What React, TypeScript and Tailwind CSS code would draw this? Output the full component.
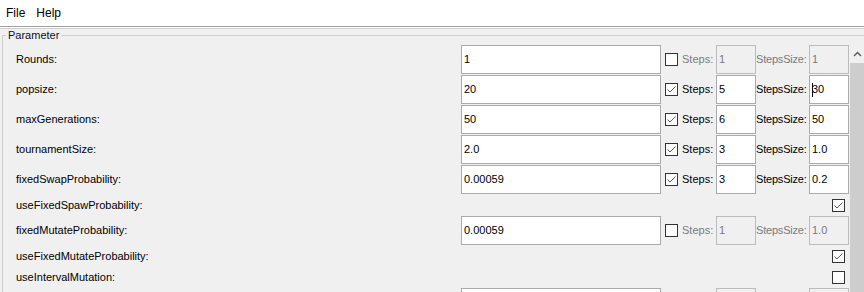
import React from 'react';

type FieldRow = {
  kind: 'field';
  label: string;
  value: string;
  stepsOn: boolean;
  steps: string;
  size: string;
  caret?: boolean;
  hideText?: boolean;
};
type CheckRow = { kind: 'check'; label: string; checked: boolean };
type Row = FieldRow | CheckRow;

const ROWS: Row[] = [
  { kind: 'field', label: 'Rounds:', value: '1', stepsOn: false, steps: '1', size: '1' },
  { kind: 'field', label: 'popsize:', value: '20', stepsOn: true, steps: '5', size: '30', caret: true },
  { kind: 'field', label: 'maxGenerations:', value: '50', stepsOn: true, steps: '6', size: '50' },
  { kind: 'field', label: 'tournamentSize:', value: '2.0', stepsOn: true, steps: '3', size: '1.0' },
  { kind: 'field', label: 'fixedSwapProbability:', value: '0.00059', stepsOn: true, steps: '3', size: '0.2' },
  { kind: 'check', label: 'useFixedSpawProbability:', checked: true },
  { kind: 'field', label: 'fixedMutateProbability:', value: '0.00059', stepsOn: false, steps: '1', size: '1.0' },
  { kind: 'check', label: 'useFixedMutateProbability:', checked: true },
  { kind: 'check', label: 'useIntervalMutation:', checked: false },
  // partially scrolled into view, only the box tops show
  { kind: 'field', label: '', value: '', stepsOn: false, steps: '', size: '', hideText: true },
];

const CheckBox = ({ checked }: { checked: boolean }) => (
  <div className="w-[13px] h-[13px] shrink-0 border border-[#333333] bg-white flex items-center justify-center">
    {checked && (
      <svg width="11" height="11" viewBox="0 0 11 11">
        <polyline points="1.5,5.5 4,8 9.5,2.5" fill="none" stroke="#5a5a5a" strokeWidth="1" />
      </svg>
    )}
  </div>
);

const TextBox = ({
  value,
  width,
  disabled,
  caret,
}: {
  value: string;
  width: string;
  disabled?: boolean;
  caret?: boolean;
}) => (
  <div
    className={`${width} h-[29px] shrink-0 border flex items-center pl-[2px] ${
      disabled ? 'bg-[#f0f0f0] border-[#bcbcbc] text-[#7a7a80]' : 'bg-white border-[#ababab] text-black'
    }`}
  >
    {caret && <span className="w-px h-[14px] bg-black -mr-px" />}
    <span>{value}</span>
  </div>
);

export default function App() {
  return (
    <div
      className="w-[864px] h-[292px] overflow-hidden bg-[#f0f0f0] text-[11px] text-black"
      style={{ fontFamily: '"Liberation Sans", Arial, sans-serif' }}
    >
      {/* menu bar */}
      <div className="h-[26px] bg-white flex items-center text-[12px] pl-[6px] gap-[11px]">
        <span>File</span>
        <span>Help</span>
      </div>
      <div className="h-px bg-[#a0a0a0]" />
      <div className="h-px bg-white" />
      <div className="h-px bg-[#d0d0d0]" />

      <div className="pl-[2px]">
        <fieldset className="border border-r-0 border-b-0 border-[#cfcfcf] h-[300px]">
          <legend className="ml-[3px] px-[2px] leading-[12px] text-[#101020]">Parameter</legend>
          <div className="flex pt-[4px]">
            <div className="flex-1 flex flex-col gap-px">
              {ROWS.map((r, i) =>
                r.kind === 'field' ? (
                  <div key={i} className="flex items-center h-[29px]">
                    <div className="w-[458px] pl-[13px]">{r.label}</div>
                    <TextBox value={r.value} width="w-[200px]" />
                    <div className="ml-[4px]">
                      {!r.hideText ? <CheckBox checked={r.stepsOn} /> : <div className="w-[13px]" />}
                    </div>
                    <div className={`w-[38px] pl-[4px] ${r.stepsOn ? 'text-black' : 'text-[#7a7a80]'}`}>
                      {r.hideText ? '' : 'Steps:'}
                    </div>
                    <TextBox value={r.steps} width="w-[40px]" disabled={!r.stepsOn} />
                    <div
                      className={`w-[53px] tracking-[-0.2px] ${r.stepsOn ? 'text-black' : 'text-[#7a7a80]'}`}
                    >
                      {r.hideText ? '' : 'StepsSize:'}
                    </div>
                    <TextBox value={r.size} width="w-[40px]" disabled={!r.stepsOn} caret={r.caret} />
                  </div>
                ) : (
                  <div key={i} className="flex items-start h-[20px]">
                    <div className="flex-1 pl-[13px] leading-[20px]">{r.label}</div>
                    <div className="mt-[4px] mr-[5px]">
                      <CheckBox checked={r.checked} />
                    </div>
                  </div>
                )
              )}
            </div>
            {/* scrollbar */}
            <div className="w-[14px] shrink-0 flex flex-col">
              <div className="h-[18px] flex items-center justify-center">
                <svg width="9" height="6" viewBox="0 0 9 6">
                  <polyline points="1,5 4.5,1.5 8,5" fill="none" stroke="#606060" strokeWidth="1.5" />
                </svg>
              </div>
              <div className="flex-1 bg-[#cdcdcd]" />
            </div>
          </div>
        </fieldset>
      </div>
    </div>
  );
}
